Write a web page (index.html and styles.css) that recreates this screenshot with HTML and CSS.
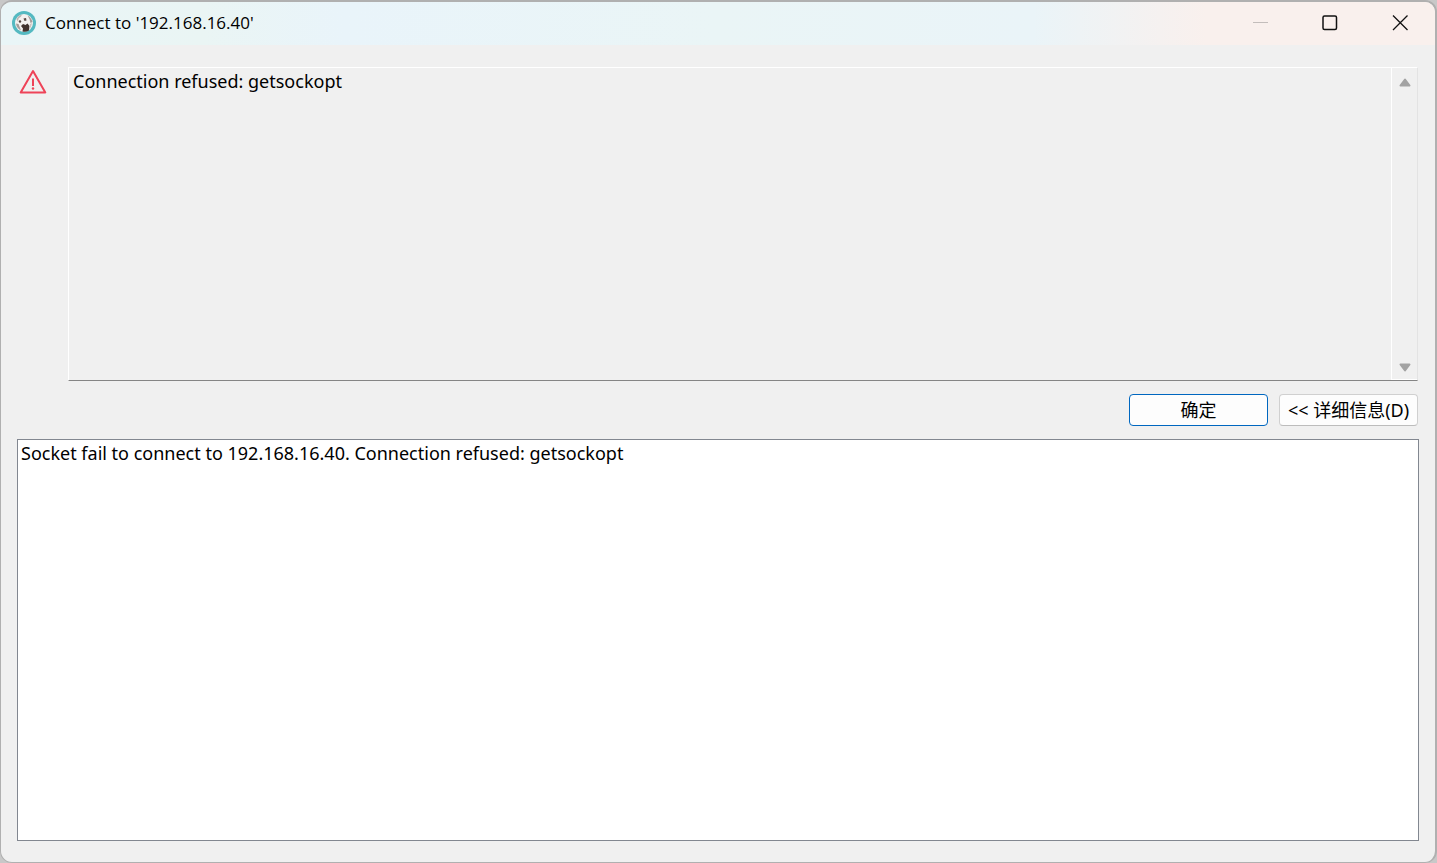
FILE: index.html
```
<!DOCTYPE html>
<html lang="zh-CN">
<head>
    <meta charset="UTF-8">
    <meta name="viewport" content="width=device-width, initial-scale=1.0">
    <title>Connect to '192.168.16.40'</title>
    <link rel="stylesheet" href="styles.css">
</head>
<body>

    <div class="window">
        <header class="titlebar">
            <svg class="app-icon" viewBox="0 0 24 24" aria-hidden="true">
                <circle cx="12" cy="12" r="12" fill="#54b9c1"/>
                <circle cx="12" cy="12" r="9" fill="#f4f1ef"/>
                <path d="M4.500 8.500 Q6 4.500 10 3.500 L9 5.500 L6.500 7.500 L6 10.500Z" fill="#b9b2b0"/>
                <path d="M15.500 4.500 Q19 6 20.500 11 L18.500 12 L17.500 8Z" fill="#a39a99"/>
                <path d="M9 15 L11 13 L13.500 14 L15.500 12.500 L17.500 15 L17 19.500 Q14 21.500 10.500 20.500 L11 17.500Z" fill="#43342f"/>
                <path d="M4 12.500 L6.500 13 L9 19.500 Q4.500 17 4 12.500Z" fill="#a59c99"/>
                <circle cx="8" cy="10.500" r="1.200" fill="#54443f"/>
                <path d="M11.500 7.500 L14 7 L14.500 9.500 L12.500 10Z" fill="#5a4c48"/>
                <path d="M18 13 L20 12 L18.800 16.500 L17.500 17Z" fill="#c9c2be"/>
            </svg>
            <h1 class="title">Connect to '192.168.16.40'</h1>
            <div class="window-controls">
                <button class="control" type="button" aria-label="最小化" disabled>
                    <svg viewBox="0 0 16 16"><path d="M1 7.500H16" stroke="#c3bdbb"/></svg>
                </button>
                <button class="control" type="button" aria-label="最大化">
                    <svg viewBox="0 0 16 16"><rect x="1" y="1" width="13.500" height="13.500" rx="1.500" fill="none" stroke="#111" stroke-width="1.500"/></svg>
                </button>
                <button class="control" type="button" aria-label="关闭">
                    <svg viewBox="0 0 16 16"><path d="M1 .5L15.500 15M15.500 .5L1 15" stroke="#111" stroke-width="1.300"/></svg>
                </button>
            </div>
        </header>

        <main class="content">
            <div class="message-row">
                <svg class="alert-icon" viewBox="0 0 28 26" aria-hidden="true">
                    <path d="M14 2 L26.300 23.500 H1.700 Z" fill="none" stroke="#ee4358" stroke-width="2" stroke-linejoin="round"/>
                    <path d="M14 9.500V17" stroke="#ee4358" stroke-width="2"/>
                    <circle cx="14" cy="19.500" r="1.200" fill="#ee4358"/>
                </svg>
                <div class="message-box">
                    <textarea class="message" aria-label="错误消息" readonly>Connection refused: getsockopt</textarea>
                    <div class="scrollbar">
                        <button type="button" aria-label="向上滚动" disabled>
                            <svg viewBox="0 0 12 9"><path d="M6 1.500 L10.500 7.500 H1.500Z" fill="#a3a3a3" stroke="#a3a3a3" stroke-width="2" stroke-linejoin="round"/></svg>
                        </button>
                        <button type="button" aria-label="向下滚动" disabled>
                            <svg viewBox="0 0 12 9"><path d="M6 7.500 L10.500 1.500 H1.500Z" fill="#a3a3a3" stroke="#a3a3a3" stroke-width="2" stroke-linejoin="round"/></svg>
                        </button>
                    </div>
                </div>
            </div>

            <div class="actions">
                <button class="btn btn-default" type="button">确定</button>
                <button class="btn" type="button" accesskey="d">&lt;&lt; 详细信息(D)</button>
            </div>

            <textarea class="details" aria-label="详细信息" readonly>Socket fail to connect to 192.168.16.40. Connection refused: getsockopt</textarea>
        </main>
    </div>

</body>
</html>
```
FILE: styles.css
```
* {
    box-sizing: border-box;
}
body {
    margin: 0;
    background: #c8c8c8;
    color: #000;
    font-family: "Noto Sans", "Noto Sans CJK SC", sans-serif;
    font-size: 18px;
}
button, textarea {
    font: inherit;
    color: inherit;
}
.window {
    display: flex;
    flex-direction: column;
    height: 100vh;
    border: 1px solid #b0b0b0;
    border-top-width: 2px;
    border-right-width: 2px;
    border-radius: 12px;
    background: #f0f0f0;
    overflow: hidden;
}

/* Title bar */
.titlebar {
    display: flex;
    align-items: center;
    height: 43px;
    flex: none;
    padding: 0 0 2px 11px;
    background: linear-gradient(90deg, #e9f5f7 0%, #eaf5f4 14%, #e9f4fa 24%, #eaf5f6 50%, #eaf4f8 72%, #f9f0ed 84%, #f9f0ed 100%);
}
.app-icon {
    width: 24px;
    height: 24px;
}
.title {
    margin: 0 0 0 9px;
    font-family: "Open Sans", sans-serif;
    font-size: 17px;
    font-weight: 400;
    line-height: 24px;
}
.window-controls {
    display: flex;
    align-self: stretch;
    margin-left: auto;
}
.control {
    display: flex;
    align-items: center;
    justify-content: center;
    width: 70px;
    padding: 0;
    border: none;
    background: none;
}
.control svg {
    width: 16px;
    height: 16px;
}

/* Message and details */
.content {
    display: flex;
    flex-direction: column;
    flex: 1;
    min-height: 0;
    padding: 22px 16px 21px;
}
.message-row {
    display: flex;
    flex: 11 1 0;
    gap: 21px;
    min-height: 0;
}
.alert-icon {
    flex: none;
    width: 28px;
    height: 26px;
    margin: 2px 0 0 2px;
}
.message-box {
    display: flex;
    flex: 1;
    margin-right: 1px;
    border: 1px solid #fff;
    border-right-color: #e3e3e3;
    border-bottom-color: #858585;
}
textarea {
    display: block;
    margin: 0;
    border: none;
    border-radius: 0;
    outline: none;
    resize: none;
    line-height: 26px;
}
.message {
    flex: 1;
    padding: 0 4px;
    background: transparent;
}
.scrollbar {
    display: flex;
    flex-direction: column;
    justify-content: space-between;
    width: 26px;
    border-left: 1px solid #fff;
    border-bottom: 1px solid #fff;
}
.scrollbar button {
    display: flex;
    align-items: center;
    justify-content: center;
    height: 28px;
    padding: 0;
    border: none;
    background: none;
}
.scrollbar button:last-child {
    height: 24px;
}
.scrollbar svg {
    width: 12px;
    height: 9px;
}
.actions {
    display: flex;
    justify-content: flex-end;
    gap: 11px;
    padding: 13px 1px;
}
.btn {
    min-width: 139px;
    height: 32px;
    padding: 0 4px;
    border: 1px solid #d0d0d0;
    border-bottom-color: #bcbcbc;
    border-radius: 4px;
    background: #fdfdfd;
    line-height: 28px;
    white-space: nowrap;
}
.btn-default {
    border-color: #0067c0;
}
.details {
    flex: 14 1 0;
    width: 100%;
    min-height: 0;
    padding: 0 3px;
    border: 1px solid #828790;
    background: #fff;
}
```
